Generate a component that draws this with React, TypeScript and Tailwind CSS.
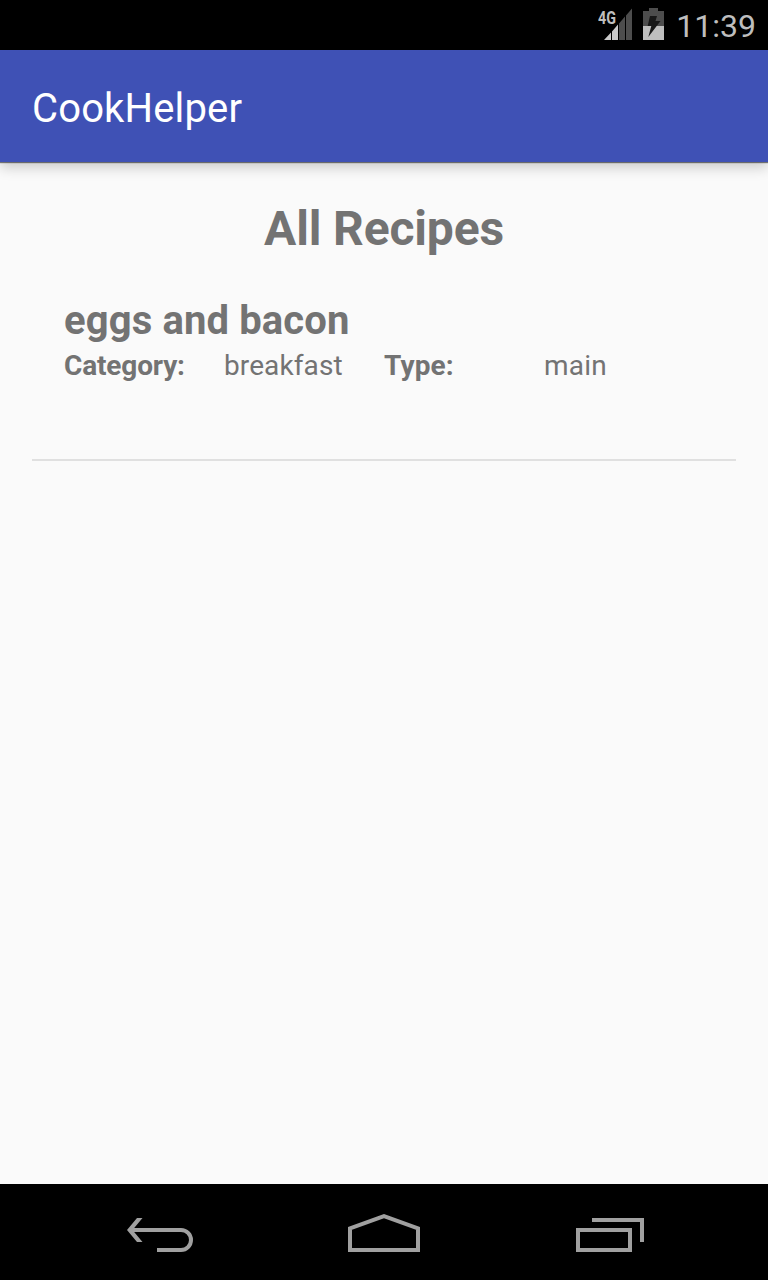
export default function App() {
  return (
    <div className="flex h-[1280px] w-[768px] flex-col overflow-hidden bg-[#fafafa] font-['Roboto','Noto_Sans',sans-serif] text-[#737373]">
      <div className="flex h-[50px] shrink-0 items-center justify-end bg-black pr-3 text-[#bebebe]">
        <svg width="36" height="34" viewBox="598 8 36 34" className="mr-[9px]">
          <text x="598" y="24" fontSize="18.5" fontWeight="700" textLength="18" lengthAdjust="spacingAndGlyphs" fill="#bebebe">4G</text>
          <path d="M604 40L611 32.5V40ZM612 31.5L618 24.5V40H612Z" fill="#cacaca" />
          <path d="M619 23.5L625 16.5V40H619ZM626 15.5L632 8.5V40H626Z" fill="#4d4d4d" />
        </svg>
        <svg width="22" height="34" viewBox="643 8 22 34" className="mr-[11px]">
          <path d="M643 11H649V8H658V11H664V26H643Z" fill="#4d4d4d" />
          <path d="M643 26H664V40H643Z" fill="#bebebe" />
          <path d="M650 16H657L655.5 21H660.5L648.3 37L651.3 26H647.7Z" fill="#181818" />
        </svg>
        <span className="pt-px text-[32px] leading-none">11:39</span>
      </div>
      <header className="z-10 flex h-28 shrink-0 items-center bg-[#3f51b5] pl-8 pt-1.5 text-[40px] leading-none tracking-[0.15px] text-white shadow-[0_1px_1px_rgba(0,0,0,.5),0_6px_12px_rgba(0,0,0,.18)]">CookHelper</header>
      <main className="flex grow flex-col">
        <h1 className="mt-[39px] text-center text-[48px] font-bold leading-[56px] tracking-[-0.15px]">All Recipes</h1>
        <section className="mx-8 mt-10 h-[164px] border-b-2 border-[#e0e0e0] px-8">
          <h2 className="text-[40px] font-bold leading-[47px] tracking-[0.12px]">eggs and bacon</h2>
          <div className="mt-[5px] grid grid-cols-4 text-[28px] leading-[33px]">
            <b className="tracking-[-0.15px]">Category:</b><span className="tracking-[0.1px]">breakfast</span><b className="tracking-[0.15px]">Type:</b><span className="tracking-[0.2px]">main</span>
          </div>
        </section>
      </main>
      <nav className="flex h-24 shrink-0 bg-black">
        <svg width="768" height="96" viewBox="0 1184 768 96" fill="none" stroke="#a0a0a0" strokeWidth="4">
          <path d="M137 1218H142.5L132.5 1230L142.5 1242H137L127 1230Z" fill="#a0a0a0" stroke="none" />
          <path d="M130 1230H181A10 10 0 0 1 181 1250H157" />
          <path d="M350 1250V1228.3L384 1216.2L418 1228.3V1250Z" />
          <path d="M578 1230H630V1250H578ZM592 1220H642V1242" />
        </svg>
      </nav>
    </div>
  );
}
